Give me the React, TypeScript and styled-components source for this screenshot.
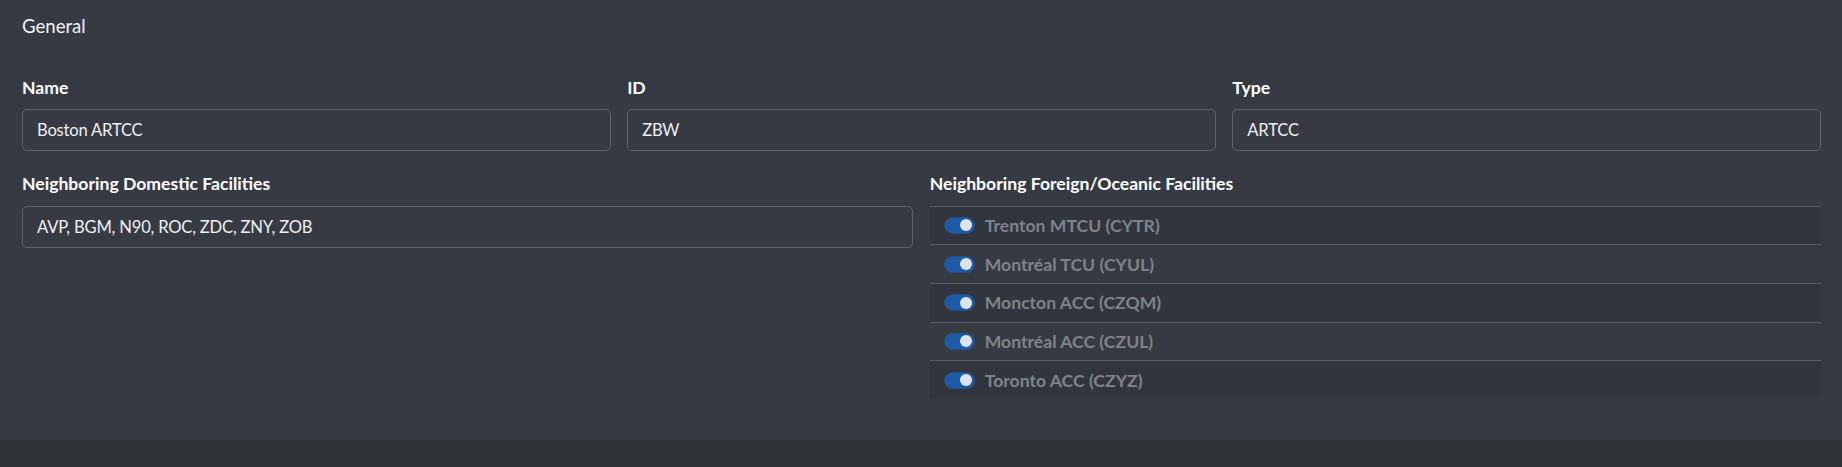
import React from 'react';
import styled, { createGlobalStyle } from 'styled-components';

const GlobalStyle = createGlobalStyle`
  html, body {
    margin: 0;
    padding: 0;
    background-color: #2f3236;
    font-family: Lato, "Noto Sans", sans-serif;
    color: #f1f2f4;
  }
`;

const Card = styled.section`
  background-color: #363a43;
  padding: 13px 21px 41px 22px;
`;

const CardTitle = styled.div`
  font-size: 18.6px;
  line-height: 26px;
  color: #f3f4f6;
  margin-bottom: 35px;
`;

const Row = styled.div<{ cols: number }>`
  display: grid;
  grid-template-columns: repeat(${p => p.cols}, 1fr);
  column-gap: 16.5px;
  align-items: start;
  margin-bottom: 19.5px;

  &:last-child {
    margin-bottom: 0;
  }
`;

const Field = styled.div`
  display: flex;
  flex-direction: column;
`;

const Label = styled.label`
  font-size: 17.6px;
  font-weight: 700;
  line-height: 26px;
  padding-top: 0.5px;
  color: #ffffff;
  margin-bottom: 8.5px;
`;

const Input = styled.input`
  box-sizing: border-box;
  height: 42px;
  width: 100%;
  padding: 0 14px;
  border: 1px solid #5e626b;
  border-radius: 5px;
  background: transparent;
  color: #eef0f3;
  font-family: inherit;
  font-size: 16.6px;
  letter-spacing: -0.2px;
  outline: none;
`;

const SwitchList = styled.div`
  display: flex;
  flex-direction: column;
`;

const SwitchRow = styled.div<{ striped: boolean }>`
  display: flex;
  align-items: center;
  gap: 10px;
  height: 38.7px;
  box-sizing: border-box;
  padding-left: 14px;
  border-top: 1px solid #5a5e66;
  background-color: ${p => (p.striped ? '#32353d' : 'transparent')};
`;

const Toggle = styled.span`
  position: relative;
  box-sizing: border-box;
  width: 31px;
  height: 17px;
  border-radius: 9px;
  background-color: #1d5ba9;
  border: 1px solid #2a4f80;
  flex-shrink: 0;

  &::after {
    content: '';
    position: absolute;
    right: 2px;
    top: 1.5px;
    width: 12px;
    height: 12px;
    border-radius: 50%;
    background-color: #dfe2e8;
  }
`;

const SwitchLabel = styled.span`
  font-size: 17.6px;
  font-weight: 700;
  color: #7f838a;
`;

const foreign = [
  'Trenton MTCU (CYTR)',
  'Montréal TCU (CYUL)',
  'Moncton ACC (CZQM)',
  'Montréal ACC (CZUL)',
  'Toronto ACC (CZYZ)',
];

const App = () => {
  return (
    <>
      <GlobalStyle />
      <Card>
        <CardTitle>General</CardTitle>
        <Row cols={3}>
          <Field>
            <Label>Name</Label>
            <Input defaultValue="Boston ARTCC" />
          </Field>
          <Field>
            <Label>ID</Label>
            <Input defaultValue="ZBW" />
          </Field>
          <Field>
            <Label>Type</Label>
            <Input defaultValue="ARTCC" />
          </Field>
        </Row>
        <Row cols={2}>
          <Field>
            <Label>Neighboring Domestic Facilities</Label>
            <Input defaultValue="AVP, BGM, N90, ROC, ZDC, ZNY, ZOB" />
          </Field>
          <Field>
            <Label>Neighboring Foreign/Oceanic Facilities</Label>
            <SwitchList>
              {foreign.map((name, i) => (
                <SwitchRow key={name} striped={i % 2 === 0}>
                  <Toggle />
                  <SwitchLabel>{name}</SwitchLabel>
                </SwitchRow>
              ))}
            </SwitchList>
          </Field>
        </Row>
      </Card>
    </>
  );
};

export default App;
